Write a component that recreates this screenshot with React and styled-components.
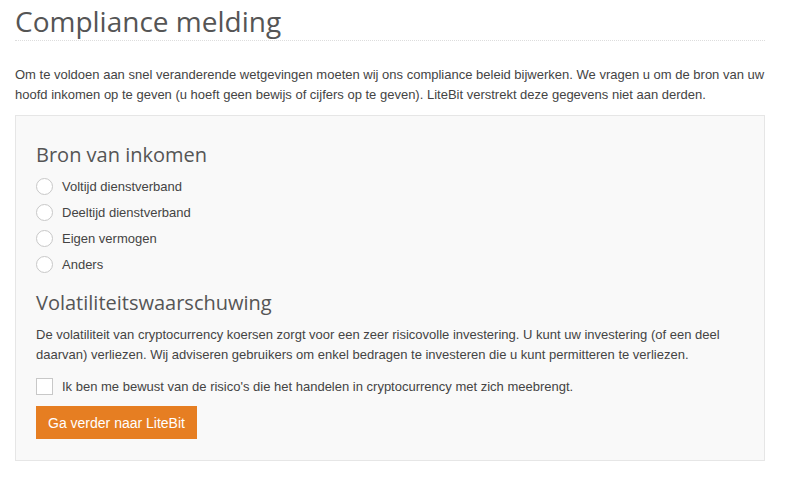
import React from 'react';
import styled, { createGlobalStyle } from 'styled-components';

const GlobalStyle = createGlobalStyle`
  body {
    margin: 0;
    background: #fff;
    font-family: "Liberation Sans", Arial, sans-serif;
    color: #444;
  }
`;

const Page = styled.div`
  width: 750px;
  padding: 0 15px;
`;

const Title = styled.h1`
  margin: 0;
  padding: 4px 0 2px;
  font-family: "Open Sans", sans-serif;
  font-weight: 400;
  font-size: 28px;
  line-height: 34px;
  color: #555;
  border-bottom: 1px dotted #ddd;
`;

const Intro = styled.p`
  margin: 24px 0 0;
  font-size: 13px;
  line-height: 20px;
  color: #444;
`;

const Panel = styled.div`
  margin-top: 10px;
  background: #f9f9f9;
  border: 1px solid #e6e6e6;
  padding: 27px 20px 21px;
`;

const SectionTitle = styled.h2`
  margin: 0 0 ${p => p.$gap || 8}px;
  font-family: "Open Sans", sans-serif;
  font-weight: 400;
  font-size: 20px;
  line-height: 24px;
  color: #555;
`;

const Options = styled.div`
  display: flex;
  flex-direction: column;
  margin-bottom: 14px;
`;

const Option = styled.label`
  display: flex;
  align-items: center;
  gap: 9px;
  height: 26px;
  font-size: 13px;
  color: #444;
`;

const Radio = styled.span`
  width: 15px;
  height: 15px;
  border-radius: 50%;
  border: 1px solid #c8c8c8;
  background: #fff;
`;

const Text = styled.p`
  margin: 0 0 8px;
  font-size: 13px;
  line-height: 20px;
  color: #444;
`;

const Box = styled.span`
  width: 15px;
  height: 15px;
  border: 1px solid #c8c8c8;
  background: #fff;
`;

const CheckRow = styled(Option)`
  margin-bottom: 7px;
`;

const Button = styled.button`
  background: #e67e22;
  border: none;
  color: #fff;
  font-family: "Liberation Sans", Arial, sans-serif;
  font-size: 14px;
  height: 33px;
  padding: 0 12px;
  cursor: pointer;
`;

const options = ['Voltijd dienstverband', 'Deeltijd dienstverband', 'Eigen vermogen', 'Anders'];

export default function App() {
  return (
    <Page>
      <GlobalStyle />
      <Title>Compliance melding</Title>
      <Intro>
        Om te voldoen aan snel veranderende wetgevingen moeten wij ons compliance beleid bijwerken. We vragen u om de bron van uw
        hoofd inkomen op te geven (u hoeft geen bewijs of cijfers op te geven). LiteBit verstrekt deze gegevens niet aan derden.
      </Intro>
      <Panel>
        <SectionTitle $gap={6}>Bron van inkomen</SectionTitle>
        <Options>
          {options.map(o => (
            <Option key={o}>
              <Radio />
              {o}
            </Option>
          ))}
        </Options>
        <SectionTitle $gap={10}>Volatiliteitswaarschuwing</SectionTitle>
        <Text>
          De volatiliteit van cryptocurrency koersen zorgt voor een zeer risicovolle investering. U kunt uw investering (of een deel
          daarvan) verliezen. Wij adviseren gebruikers om enkel bedragen te investeren die u kunt permitteren te verliezen.
        </Text>
        <CheckRow>
          <Box />
          Ik ben me bewust van de risico's die het handelen in cryptocurrency met zich meebrengt.
        </CheckRow>
        <Button>Ga verder naar LiteBit</Button>
      </Panel>
    </Page>
  );
}
